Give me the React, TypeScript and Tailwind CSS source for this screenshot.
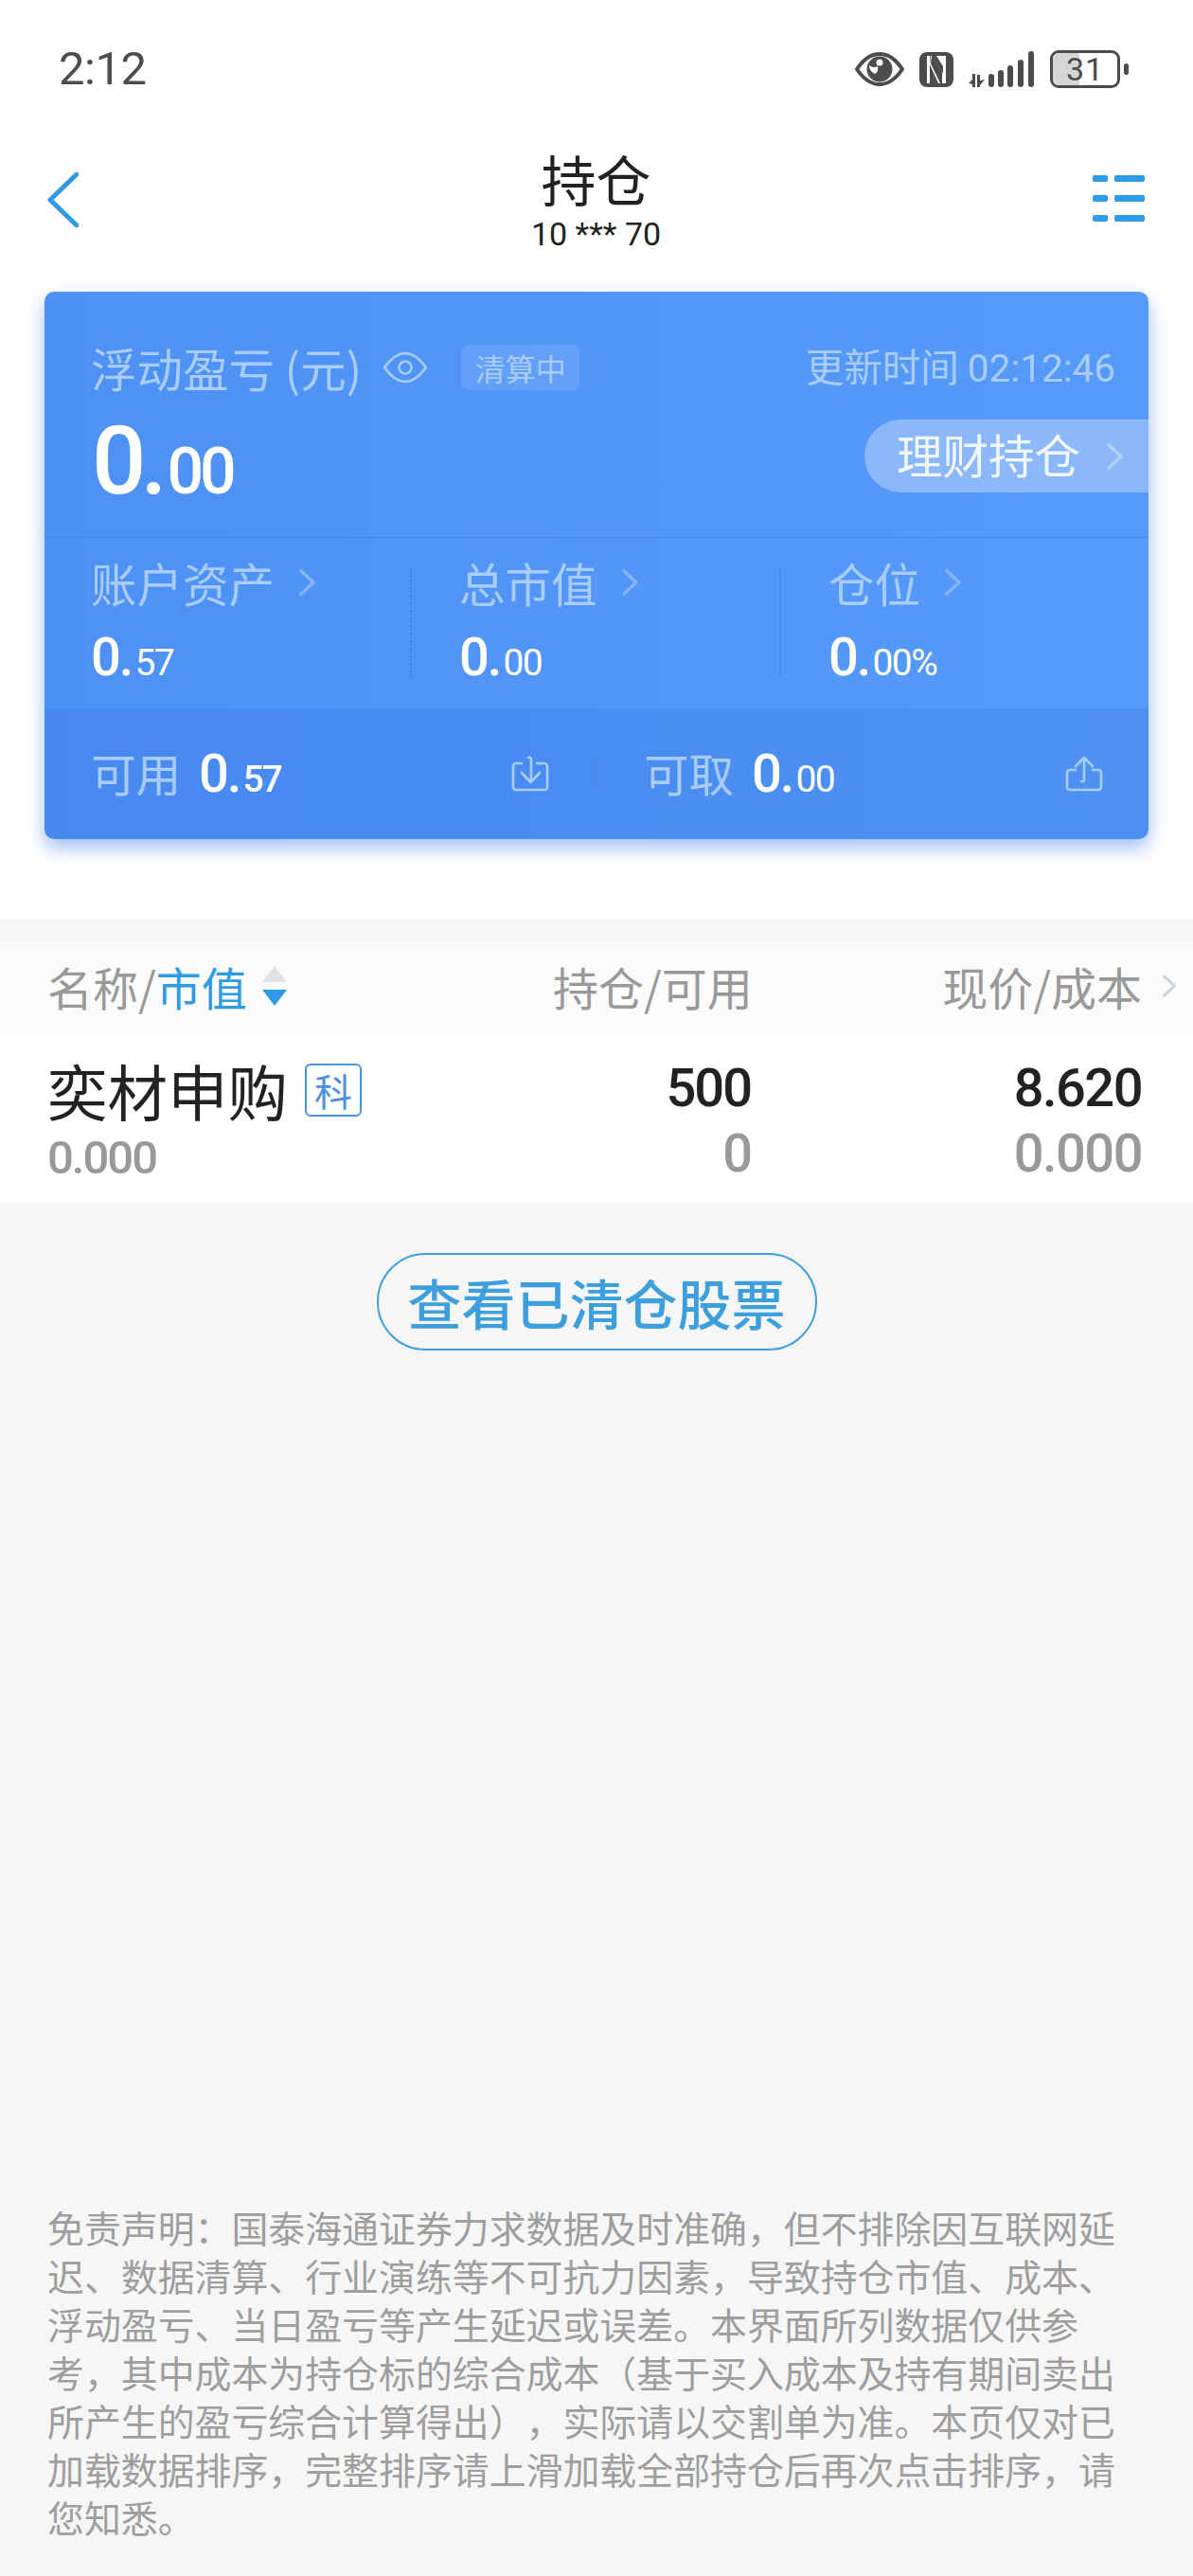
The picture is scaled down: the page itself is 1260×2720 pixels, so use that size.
const cjk = "font-['Noto_Sans_CJK_SC',sans-serif]";
const num = "font-['Roboto','Noto_Sans_CJK_SC',sans-serif]";

function Chevron({ className }: { className?: string }) {
    return (
        <svg viewBox="0 0 19 30" fill="none" className={className}>
            <path d="M3 3 L16 15 L3 27" stroke="currentColor" strokeWidth="3.6" strokeLinecap="round" strokeLinejoin="round" />
        </svg>
    );
}

function StatusIcons() {
    return (
        <div className="flex items-center text-[#4c4c4c]">
            <svg viewBox="0 0 52 36" className="h-[36px] w-[52px]">
                <path d="M2 18 C10 6 18 2 26 2 C34 2 42 6 50 18 C42 30 34 34 26 34 C18 34 10 30 2 18 Z" fill="none" stroke="currentColor" strokeWidth="4" strokeLinejoin="round" />
                <circle cx="26" cy="18" r="13.5" fill="currentColor" />
                <path d="M15 14 a10 10 0 0 0 6 9 a5 6 0 0 0 3 -8 a8 8 0 0 1 -9 -1 Z" fill="#fff" />
                <circle cx="26" cy="11" r="3.5" fill="#fff" />
            </svg>
            <svg viewBox="0 0 36 37" className="ml-[16px] h-[37px] w-[36px]">
                <rect width="36" height="37" rx="8" fill="currentColor" />
                <path d="M8 4 L11 4 L11 33 L8 33 Z M25 4 L28 4 L28 33 L25 33 Z" fill="#fff" />
                <path d="M12 3 L26 24 L26 33 L20 33 L11 13 Z M18 4 L25 4 L25 15 Z" fill="#fff" />
                <path d="M13 4 L24 21 L24 33 L22 33 L12 12 Z" fill="currentColor" />
            </svg>
            <svg viewBox="0 0 70 38" className="ml-[16px] h-[38px] w-[70px]">
                <path d="M4 24 H7 V38 H4 V35 L0 34 L4 30 Z M9 25 H12 V31 L17 30 L12 36 V38 H9 Z" fill="currentColor" />
                <rect x="21" y="24" width="6" height="14" rx="3" fill="currentColor" />
                <rect x="31" y="20" width="6" height="18" rx="3" fill="currentColor" />
                <rect x="41" y="15" width="6" height="23" rx="3" fill="currentColor" />
                <rect x="52" y="9" width="6" height="29" rx="3" fill="currentColor" />
                <rect x="63" y="0" width="6" height="38" rx="3" fill="currentColor" />
            </svg>
            <div className="relative ml-[16px] flex h-[40px] w-[74px] items-center justify-center overflow-hidden rounded-[9px] border-[3px] border-[#4c4c4c]">
                <div className="absolute inset-y-0 left-0 w-[28px] bg-[#d6d6d6]" />
                <span className={`${num} relative text-[34px] leading-none tracking-[1px] text-[#4c4c4c]`}>31</span>
            </div>
            <div className="ml-[4px] h-[12px] w-[5px] rounded-full bg-[#4c4c4c]" />
        </div>
    );
}

function Stat({ label, whole, frac, pct, className }: { label: string; whole: string; frac: string; pct?: boolean; className?: string }) {
    return (
        <div className={className}>
            <div className="flex h-[48px] items-center">
                <span className={`${cjk} text-[48.5px] leading-none text-[#a9ccfb]`}>{label}</span>
                <Chevron className="ml-[25px] h-[30px] w-[19px] text-[#85b4f9]" />
            </div>
            <div className={`${num} mt-[27px] flex h-[48px] items-baseline font-medium text-white`}>
                <span className="text-[56px] leading-none tracking-[-2px]">{whole}.</span>
                <span className="ml-[3px] text-[39px] leading-none font-normal tracking-[-1.5px]">{frac}{pct ? "%" : ""}</span>
            </div>
        </div>
    );
}

function StatDivider() {
    return <div className="mt-[10px] h-[113px] border-l-2 border-dotted border-[#4683e6]" />;
}

function IconDown() {
    return (
        <svg viewBox="0 0 40 40" fill="none" className="h-[40px] w-[40px] text-[#a9ccfb]" stroke="currentColor" strokeWidth="2.6" strokeLinecap="round" strokeLinejoin="round">
            <path d="M11 9 H5 a3 3 0 0 0 -3 3 V34 a3 3 0 0 0 3 3 H35 a3 3 0 0 0 3 -3 V12 a3 3 0 0 0 -3 -3 H27" />
            <path d="M18 3 a2 2 0 0 1 3 2 V26" />
            <path d="M11 19 L20.5 29 L30 19" />
        </svg>
    );
}

function IconUp() {
    return (
        <svg viewBox="0 0 40 40" fill="none" className="h-[40px] w-[40px] text-[#a9ccfb]" stroke="currentColor" strokeWidth="2.6" strokeLinecap="round" strokeLinejoin="round">
            <path d="M11 16 H5 a3 3 0 0 0 -3 3 V34 a3 3 0 0 0 3 3 H35 a3 3 0 0 0 3 -3 V19 a3 3 0 0 0 -3 -3 H29" />
            <path d="M20 3 V26 a2 2 0 0 1 -3 2" />
            <path d="M11 12 L20 3 L29 12" />
        </svg>
    );
}

function Card() {
    return (
        <div className="mx-[47px] h-[578px] overflow-hidden rounded-[10px] bg-gradient-to-r from-[#4e91f5] to-[#569af9] shadow-[0_9px_20px_rgba(80,135,240,0.55)]">
            <div className="h-[260px] border-b border-[#4a88e8]">
                <div className="flex items-center justify-between pt-[54px] pr-[35px] pl-[49px]">
                    <div className="flex items-center">
                        <span className={`${cjk} text-[48.5px] leading-[48px] text-[#a9ccfb]`}>浮动盈亏 (元)</span>
                        <svg viewBox="0 0 48 34" fill="none" className="ml-[22px] h-[34px] w-[48px] text-[#a9ccfb]" stroke="currentColor" strokeWidth="2.6">
                            <path d="M2 17 C10 6 17 2 24 2 C31 2 38 6 46 17 C38 28 31 32 24 32 C17 32 10 28 2 17 Z" strokeLinejoin="round" />
                            <circle cx="24" cy="17" r="6.5" />
                        </svg>
                        <span className="ml-[35px] flex h-[48px] w-[125px] items-center justify-center rounded-[8px] bg-white/10 text-[32px] leading-none text-[#a9ccfb]">清算中</span>
                    </div>
                    <span className={`${cjk} text-[40.5px] leading-[48px] text-[#a9ccfb]`}>
                        更新时间 <span className={num}>02:12:46</span>
                    </span>
                </div>
                <div className="flex items-start justify-between">
                    <div className={`${num} mt-[23px] flex items-baseline pl-[50px] font-medium text-white`}>
                        <span className="text-[101px] leading-none tracking-[-6px]">0</span>
                        <span className="text-[101px] leading-none">.</span>
                        <span className="text-[68px] leading-none tracking-[-4px]">00</span>
                    </div>
                    <div className="mt-[30px] flex h-[77px] w-[300px] items-center rounded-l-full bg-[#8ab8fb] pl-[34px]">
                        <span className={`${cjk} -mt-[4px] text-[48.5px] leading-none text-[#f2f7ff]`}>理财持仓</span>
                        <Chevron className="ml-[27px] h-[30px] w-[19px] text-[#b5d2fd]" />
                    </div>
                </div>
            </div>
            <div className="flex h-[180px] pt-[23px]">
                <Stat label="账户资产" whole="0" frac="57" className="w-[386px] pl-[49px]" />
                <StatDivider />
                <Stat label="总市值" whole="0" frac="00" className="w-[388px] pl-[50px]" />
                <StatDivider />
                <Stat label="仓位" whole="0" frac="00" pct className="pl-[50px]" />
            </div>
            <div className="flex h-[138px] items-center bg-[#1f5fd0]/15">
                <div className="flex w-[582px] items-center justify-between pr-[49px] pl-[49px]">
                    <div className="flex items-baseline">
                        <span className={`${cjk} text-[47.5px] leading-none text-[#a9ccfb]`}>可用</span>
                        <span className={`${num} ml-[19px] text-[56px] leading-none font-medium tracking-[-2px] text-white`}>0.</span>
                        <span className={`${num} ml-[3px] text-[39px] leading-none font-medium tracking-[-2px] text-white`}>57</span>
                    </div>
                    <IconDown />
                </div>
                <div className="h-[36px] w-px bg-[#4785e6]" />
                <div className="flex flex-1 items-center justify-between pr-[48px] pl-[50px]">
                    <div className="flex items-baseline">
                        <span className={`${cjk} text-[47.5px] leading-none text-[#a9ccfb]`}>可取</span>
                        <span className={`${num} ml-[19px] text-[56px] leading-none font-medium tracking-[-2px] text-white`}>0.</span>
                        <span className={`${num} ml-[3px] text-[39px] leading-none tracking-[-1.5px] text-white`}>00</span>
                    </div>
                    <IconUp />
                </div>
            </div>
        </div>
    );
}

export default function App() {
    return (
        <div className={`${cjk} flex min-h-[2720px] w-[1260px] flex-col bg-[#f6f6f6]`}>
            <div className="bg-white">
                <div className="flex h-[143px] items-start justify-between pt-[53px] pr-[68px] pl-[62px]">
                    <span className={`${num} text-[49px] leading-[40px] tracking-[-0.5px] text-[#4c4c4c]`}>2:12</span>
                    <StatusIcons />
                </div>
                <div className="flex h-[165px] items-start pr-[51px] pl-[50px]">
                    <div className="w-[55px]">
                        <svg viewBox="0 0 33 58" fill="none" className="mt-[39px] h-[58px] w-[33px] text-[#2f9be4]">
                            <path d="M31 2 L3 29 L31 56" stroke="currentColor" strokeWidth="5" strokeLinecap="round" strokeLinejoin="round" />
                        </svg>
                    </div>
                    <div className="flex flex-1 flex-col items-center">
                        <span className="mt-[12px] text-[58px] leading-[66px] text-[#222]">持仓</span>
                        <span className={`${num} mt-[8px] text-[34px] leading-[36px] text-[#222]`}>10 *** 70</span>
                    </div>
                    <div className="mt-[42px] flex w-[55px] flex-col gap-[14px]">
                        {[0, 1, 2].map((i) => (
                            <div key={i} className="flex h-[7px] gap-[7px]">
                                <div className="w-[16px] rounded-[2px] bg-[#2f9be4]" />
                                <div className="flex-1 rounded-[2px] bg-[#2f9be4]" />
                            </div>
                        ))}
                    </div>
                </div>
                <Card />
                <div className="h-[85px]" />
            </div>
            <div className="mt-[23px] flex h-[98px] items-center justify-between bg-[#fbfbfc] pr-[17px] pb-[5px] pl-[50px] text-[48px] text-[#999]">
                <div className="flex w-[300px] items-center">
                    <span>名称/</span>
                    <span className="text-[#2f9be4]">市值</span>
                    <svg viewBox="0 0 26 42" className="ml-[16px] h-[42px] w-[26px] shrink-0">
                        <path d="M13 0 L26 17 H0 Z" fill="#e0e3e6" />
                        <path d="M0 25 H26 L13 42 Z" fill="#2f9be4" />
                    </svg>
                </div>
                <span className="ml-[234px]">持仓/可用</span>
                <div className="ml-auto flex items-center">
                    <span>现价/成本</span>
                    <Chevron className="ml-[21px] h-[30px] w-[16px] text-[#c5d3e3]" />
                </div>
            </div>
            <div className="flex h-[179px] bg-white pr-[54px] pl-[50px]">
                <div className="w-[451px]">
                    <div className="mt-[30px] flex h-[58px] items-center">
                        <span className="text-[63.5px] leading-none text-[#222]">奕材申购</span>
                        <span className="ml-[18px] flex h-[56px] w-[60px] items-center justify-center rounded-[6px] border-2 border-[#4f8fdf] text-[40px] leading-none text-[#4f8fdf]">科</span>
                    </div>
                    <div className={`${num} mt-[23px] text-[49px] leading-[40px] font-medium tracking-[-2px] text-[#999]`}>0.000</div>
                </div>
                <div className={`${num} w-[292px] pt-[29px] text-right text-[56px] font-medium tracking-[-2px]`}>
                    <div className="leading-[56px] text-[#222]">500</div>
                    <div className="mt-[13px] leading-[56px] text-[#999]">0</div>
                </div>
                <div className={`${num} flex-1 pt-[29px] text-right text-[56px] font-medium tracking-[-1.5px]`}>
                    <div className="leading-[56px] text-[#222]">8.620</div>
                    <div className="mt-[13px] leading-[56px] text-[#999]">0.000</div>
                </div>
            </div>
            <div className="mt-[52px] flex justify-center">
                <span className="flex h-[103px] w-[465px] items-center justify-center rounded-full border-[2.5px] border-[#3d9fde] text-[57px] leading-none font-medium text-[#3d9fde]">查看已清仓股票</span>
            </div>
            <p className="mt-auto w-[1232px] pr-[50px] pb-[37px] pl-[50px] text-[38.9px] leading-[51px] text-[#9e9e9e] [text-spacing-trim:space-all]">
                免责声明：国泰海通证券力求数据及时准确，但不排除因互联网延迟、数据清算、行业演练等不可抗力因素，导致持仓市值、成本、浮动盈亏、当日盈亏等产生延迟或误差。本界面所列数据仅供参考，其中成本为持仓标的综合成本（基于买入成本及持有期间卖出所产生的盈亏综合计算得出），实际请以交割单为准。本页仅对已加载数据排序，完整排序请上滑加载全部持仓后再次点击排序，请您知悉。
            </p>
        </div>
    );
}
